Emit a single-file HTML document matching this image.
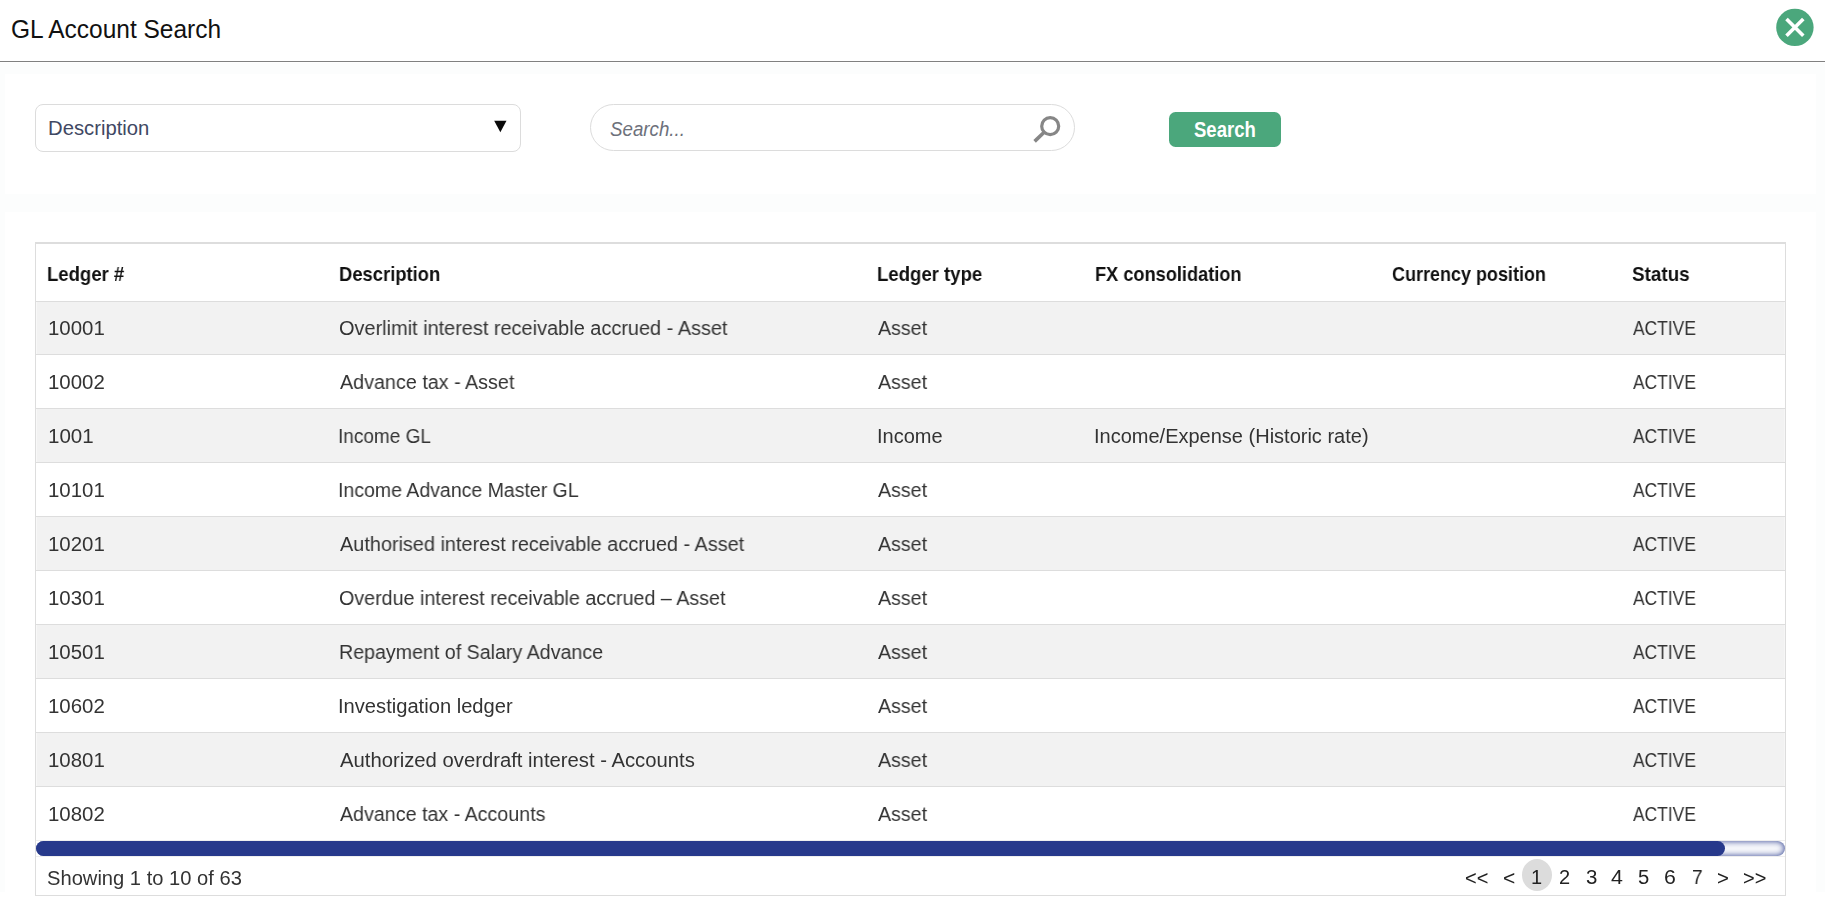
<!DOCTYPE html>
<html lang="en">
<head>
<meta charset="utf-8">
<title>GL Account Search</title>
<style>
*{box-sizing:border-box;margin:0;padding:0}
html,body{width:1825px;height:910px;overflow:hidden;background:#fff}
body{font-family:"Liberation Sans",sans-serif;color:#333;position:relative}
.abs{position:absolute;white-space:nowrap}
.t{transform-origin:0 50%;line-height:24px;font-size:20px}
.title{font-size:26.5px;line-height:32px;color:#111}
.seltxt{color:#3f4863}
.ph{color:#6d717b;font-style:italic}
.btntxt{color:#fff;font-weight:bold;font-size:22px}
.h{color:#111;font-weight:bold;font-size:21px}
.c{color:#333}
.pg{color:#222}
.frame{left:0;top:63px;width:1825px;height:829px;background:#fcfdfd}
.frame-in{left:5px;top:74px;width:1811px;height:818px;background:#fff}
.frame-bar{left:5px;top:194px;width:1811px;height:18px;background:#fcfdfd}
.hline{left:0;top:61px;width:1825px;height:1px;background:#808080}
.close{left:1775px;top:8px;width:40px;height:40px}
.select{left:35px;top:104px;width:486px;height:48px;border:1px solid #dcdcdc;border-radius:8px;background:#fff}
.search{left:590px;top:104px;width:485px;height:47px;border:1px solid #dcdcdc;border-radius:24px;background:#fff}
.btn{left:1169px;top:112px;width:112px;height:35px;border-radius:6.5px;background:#4ba77c}
.tbl{left:35px;top:242px;width:1751px;height:654px;border:1px solid #ddd;border-top:2px solid #ddd}
.row{left:36px;width:1749px;border-top:1px solid #ddd}
.row.g{background:linear-gradient(90deg,#f8f8f8 1px,#f2f2f2 1px,#f2f2f2 calc(100% - 1px),#f6f6f6 calc(100% - 1px))}
.sbl{left:36px;width:1749px;height:1px;background:#eee}
.track{left:36px;top:841px;width:1749px;height:15px;border-radius:7.5px;background:#f6f7fb;box-shadow:inset 0 0 6px #27398b}
.thumb{left:36px;top:841px;width:1689px;height:15px;border-radius:7.5px;background:#27398b}
.cur{left:1522px;top:859px;width:30px;height:32px;border-radius:50%;background:#dcdcdc}
.h,.c,.pg{will-change:transform}
</style>
</head>
<body>
<div class="abs frame"></div>
<div class="abs frame-in"></div>
<div class="abs frame-bar"></div>
<div class="abs hline"></div>
<svg class="abs close" viewBox="0 0 40 40"><circle cx="19.900" cy="19.400" r="18.700" fill="#4ba77c"/><path d="M11.500 11 L28.300 27.800 M28.300 11 L11.500 27.800" stroke="#fff" stroke-width="3.600" fill="none"/></svg>
<div class="abs select"></div>
<svg class="abs" style="left:490px;top:116px" width="20" height="20" viewBox="0 0 20 20"><path d="M4.200 4.800 L16.500 4.800 L10.350 16.200 Z" fill="#0a0a0a"/></svg>
<div class="abs search"></div>
<svg class="abs" style="left:1025px;top:110px" width="40" height="40" viewBox="0 0 40 40"><circle cx="25.200" cy="16.200" r="8.500" stroke="#868686" stroke-width="3.200" fill="none"/><path d="M18.600 22.700 L9.600 31.400" stroke="#868686" stroke-width="3.600" fill="none"/></svg>
<div class="abs btn"></div>
<div class="abs tbl"></div>
<div class="abs sbl" style="top:840px"></div>
<div class="abs sbl" style="top:856px"></div>
<div class="abs track"></div>
<div class="abs thumb"></div>
<div class="abs cur"></div>
<div class="abs row g" style="top:301px;height:53px"></div>
<div class="abs row" style="top:354px;height:54px"></div>
<div class="abs row g" style="top:408px;height:54px"></div>
<div class="abs row" style="top:462px;height:54px"></div>
<div class="abs row g" style="top:516px;height:54px"></div>
<div class="abs row" style="top:570px;height:54px"></div>
<div class="abs row g" style="top:624px;height:54px"></div>
<div class="abs row" style="top:678px;height:54px"></div>
<div class="abs row g" style="top:732px;height:54px"></div>
<div class="abs row" style="top:786px;height:54px"></div>
<div id="title" class="abs t title" style="left:11.34px;top:13.3px;transform:scaleX(0.9243)">GL Account Search</div>
<div id="seltxt" class="abs t seltxt" style="left:47.78px;top:116.3px;transform:scaleX(1.0129)">Description</div>
<div id="ph" class="abs t ph" style="left:610.34px;top:116.6px;transform:scaleX(0.9364)">Search...</div>
<div id="btn" class="abs t btntxt" style="left:1194.39px;top:117.6px;transform:scaleX(0.8420)">Search</div>
<div id="h1" class="abs t h" style="left:46.55px;top:262px;transform:scaleX(0.8826)">Ledger #</div>
<div id="h2" class="abs t h" style="left:338.72px;top:262px;transform:scaleX(0.8761)">Description</div>
<div id="h3" class="abs t h" style="left:877.02px;top:262px;transform:scaleX(0.8846)">Ledger type</div>
<div id="h4" class="abs t h" style="left:1094.54px;top:262px;transform:scaleX(0.8661)">FX consolidation</div>
<div id="h5" class="abs t h" style="left:1391.86px;top:262px;transform:scaleX(0.8568)">Currency position</div>
<div id="h6" class="abs t h" style="left:1632.21px;top:262px;transform:scaleX(0.8972)">Status</div>
<div id="r0a" class="abs t c" style="left:47.52px;top:316px;transform:scaleX(1.0216)">10001</div>
<div id="r0b" class="abs t c" style="left:339.40px;top:316px;transform:scaleX(0.9958)">Overlimit interest receivable accrued - Asset</div>
<div id="r0c" class="abs t c" style="left:878.35px;top:316px;transform:scaleX(0.9820)">Asset</div>
<div id="r0f" class="abs t c" style="left:1633.16px;top:316px;transform:scaleX(0.8702)">ACTIVE</div>
<div id="r1a" class="abs t c" style="left:47.52px;top:370px;transform:scaleX(1.0216)">10002</div>
<div id="r1b" class="abs t c" style="left:340.15px;top:370px;transform:scaleX(0.9864)">Advance tax - Asset</div>
<div id="r1c" class="abs t c" style="left:878.35px;top:370px;transform:scaleX(0.9820)">Asset</div>
<div id="r1f" class="abs t c" style="left:1633.16px;top:370px;transform:scaleX(0.8702)">ACTIVE</div>
<div id="r2a" class="abs t c" style="left:47.51px;top:424px;transform:scaleX(1.0272)">1001</div>
<div id="r2b" class="abs t c" style="left:338.49px;top:424px;transform:scaleX(0.9497)">Income GL</div>
<div id="r2c" class="abs t c" style="left:876.90px;top:424px">Income</div>
<div id="r2d" class="abs t c" style="left:1094.25px;top:424px;transform:scaleX(0.9989)">Income/Expense (Historic rate)</div>
<div id="r2f" class="abs t c" style="left:1633.16px;top:424px;transform:scaleX(0.8702)">ACTIVE</div>
<div id="r3a" class="abs t c" style="left:47.52px;top:478px;transform:scaleX(1.0216)">10101</div>
<div id="r3b" class="abs t c" style="left:338.44px;top:478px;transform:scaleX(0.9751)">Income Advance Master GL</div>
<div id="r3c" class="abs t c" style="left:878.35px;top:478px;transform:scaleX(0.9820)">Asset</div>
<div id="r3f" class="abs t c" style="left:1633.16px;top:478px;transform:scaleX(0.8702)">ACTIVE</div>
<div id="r4a" class="abs t c" style="left:47.52px;top:532px;transform:scaleX(1.0216)">10201</div>
<div id="r4b" class="abs t c" style="left:340.15px;top:532px;transform:scaleX(0.9935)">Authorised interest receivable accrued - Asset</div>
<div id="r4c" class="abs t c" style="left:878.35px;top:532px;transform:scaleX(0.9820)">Asset</div>
<div id="r4f" class="abs t c" style="left:1633.16px;top:532px;transform:scaleX(0.8702)">ACTIVE</div>
<div id="r5a" class="abs t c" style="left:47.52px;top:586px;transform:scaleX(1.0216)">10301</div>
<div id="r5b" class="abs t c" style="left:339.41px;top:586px;transform:scaleX(0.9847)">Overdue interest receivable accrued – Asset</div>
<div id="r5c" class="abs t c" style="left:878.35px;top:586px;transform:scaleX(0.9820)">Asset</div>
<div id="r5f" class="abs t c" style="left:1633.16px;top:586px;transform:scaleX(0.8702)">ACTIVE</div>
<div id="r6a" class="abs t c" style="left:47.52px;top:640px;transform:scaleX(1.0216)">10501</div>
<div id="r6b" class="abs t c" style="left:338.68px;top:640px;transform:scaleX(0.9814)">Repayment of Salary Advance</div>
<div id="r6c" class="abs t c" style="left:878.35px;top:640px;transform:scaleX(0.9820)">Asset</div>
<div id="r6f" class="abs t c" style="left:1633.16px;top:640px;transform:scaleX(0.8702)">ACTIVE</div>
<div id="r7a" class="abs t c" style="left:47.52px;top:694px;transform:scaleX(1.0216)">10602</div>
<div id="r7b" class="abs t c" style="left:338.39px;top:694px;transform:scaleX(1.0070)">Investigation ledger</div>
<div id="r7c" class="abs t c" style="left:878.35px;top:694px;transform:scaleX(0.9820)">Asset</div>
<div id="r7f" class="abs t c" style="left:1633.16px;top:694px;transform:scaleX(0.8702)">ACTIVE</div>
<div id="r8a" class="abs t c" style="left:47.52px;top:748px;transform:scaleX(1.0216)">10801</div>
<div id="r8b" class="abs t c" style="left:340.15px;top:748px;transform:scaleX(1.0132)">Authorized overdraft interest - Accounts</div>
<div id="r8c" class="abs t c" style="left:878.35px;top:748px;transform:scaleX(0.9820)">Asset</div>
<div id="r8f" class="abs t c" style="left:1633.16px;top:748px;transform:scaleX(0.8702)">ACTIVE</div>
<div id="r9a" class="abs t c" style="left:47.52px;top:802px;transform:scaleX(1.0216)">10802</div>
<div id="r9b" class="abs t c" style="left:340.15px;top:802px;transform:scaleX(0.9830)">Advance tax - Accounts</div>
<div id="r9c" class="abs t c" style="left:878.35px;top:802px;transform:scaleX(0.9820)">Asset</div>
<div id="r9f" class="abs t c" style="left:1633.16px;top:802px;transform:scaleX(0.8702)">ACTIVE</div>
<div id="foot" class="abs t c" style="left:46.54px;top:866px;transform:scaleX(1.0070)">Showing 1 to 10 of 63</div>
<div id="p0" class="abs t pg" style="left:1464.72px;top:865.5px;transform:scaleX(0.9814)">&lt;&lt;</div>
<div id="p1" class="abs t pg" style="left:1502.51px;top:865.5px;transform:scaleX(1.0500)">&lt;</div>
<div id="p2" class="abs t pg" style="left:1530.90px;top:864.5px">1</div>
<div id="p3" class="abs t pg" style="left:1559.06px;top:864.5px;transform:scaleX(0.9838)">2</div>
<div id="p4" class="abs t pg" style="left:1585.59px;top:864.5px;transform:scaleX(1.0211)">3</div>
<div id="p5" class="abs t pg" style="left:1611.46px;top:864.5px;transform:scaleX(1.0700)">4</div>
<div id="p6" class="abs t pg" style="left:1638.19px;top:864.5px;transform:scaleX(1.0105)">5</div>
<div id="p7" class="abs t pg" style="left:1664.14px;top:864.5px;transform:scaleX(1.0632)">6</div>
<div id="p8" class="abs t pg" style="left:1691.55px;top:864.5px;transform:scaleX(0.9514)">7</div>
<div id="p9" class="abs t pg" style="left:1716.88px;top:865.5px;transform:scaleX(1.0200)">&gt;</div>
<div id="p10" class="abs t pg" style="left:1743.35px;top:865.5px;transform:scaleX(0.9953)">&gt;&gt;</div>
</body>
</html>
